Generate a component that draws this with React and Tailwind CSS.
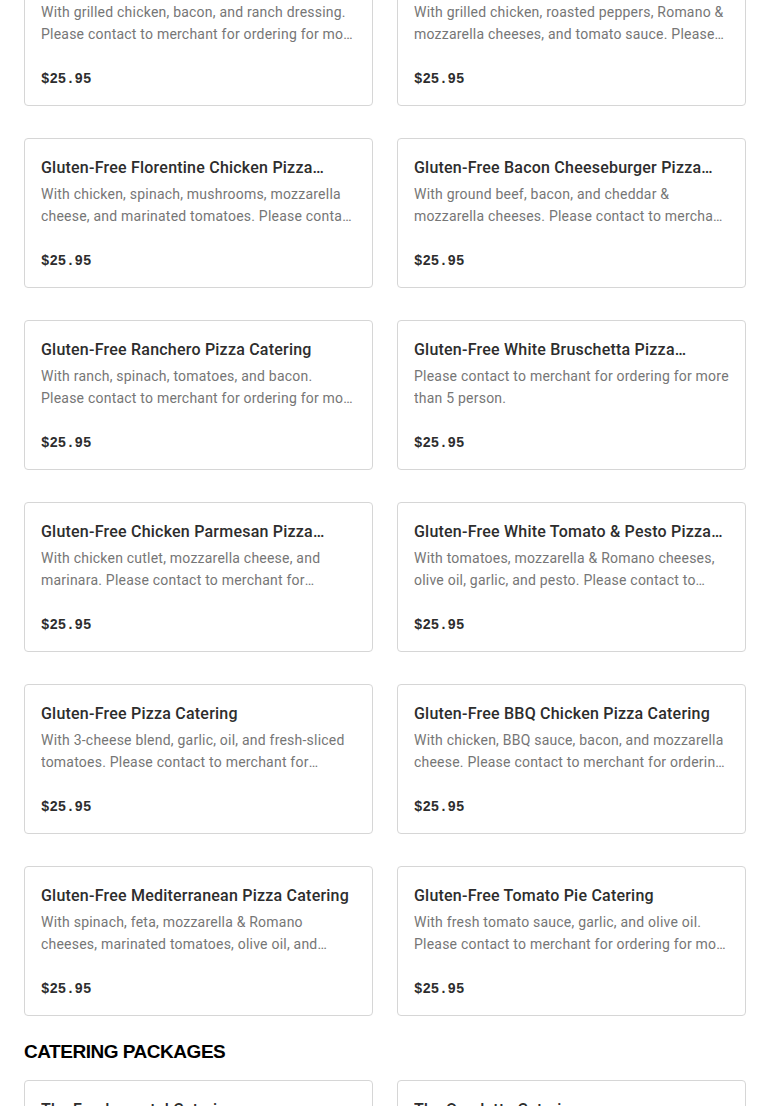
import React from "react"

const ITEMS = [
  {
    title: "Gluten-Free Chicken Bacon Ranch Pizza Catering",
    desc: "With grilled chicken, bacon, and ranch dressing. Please contact to merchant for ordering for more than 5 person.",
  },
  {
    title: "Gluten-Free Chicken & Roasted Pepper Pizza Catering",
    desc: "With grilled chicken, roasted peppers, Romano & mozzarella cheeses, and tomato sauce. Please contact to merchant for ordering for more than 5 person.",
  },
  {
    title: "Gluten-Free Florentine Chicken Pizza Catering",
    desc: "With chicken, spinach, mushrooms, mozzarella cheese, and marinated tomatoes. Please contact to merchant for ordering for more than 5 person.",
  },
  {
    title: "Gluten-Free Bacon Cheeseburger Pizza Catering",
    desc: "With ground beef, bacon, and cheddar & mozzarella cheeses. Please contact to merchant for ordering for more than 5 person.",
  },
  {
    title: "Gluten-Free Ranchero Pizza Catering",
    desc: "With ranch, spinach, tomatoes, and bacon. Please contact to merchant for ordering for more than 5 person.",
  },
  {
    title: "Gluten-Free White Bruschetta Pizza Catering",
    desc: "Please contact to merchant for ordering for more than 5 person.",
  },
  {
    title: "Gluten-Free Chicken Parmesan Pizza Catering",
    desc: "With chicken cutlet, mozzarella cheese, and marinara. Please contact to merchant for ordering for more than 5 person.",
  },
  {
    title: "Gluten-Free White Tomato & Pesto Pizza Catering",
    desc: "With tomatoes, mozzarella & Romano cheeses, olive oil, garlic, and pesto. Please contact to merchant for ordering for more than 5 person.",
  },
  {
    title: "Gluten-Free Pizza Catering",
    desc: "With 3-cheese blend, garlic, oil, and fresh-sliced tomatoes. Please contact to merchant for ordering for more than 5 person.",
  },
  {
    title: "Gluten-Free BBQ Chicken Pizza Catering",
    desc: "With chicken, BBQ sauce, bacon, and mozzarella cheese. Please contact to merchant for ordering for more than 5 person.",
  },
  {
    title: "Gluten-Free Mediterranean Pizza Catering",
    desc: "With spinach, feta, mozzarella & Romano cheeses, marinated tomatoes, olive oil, and garlic. Please contact to merchant for ordering for more than 5 person.",
  },
  {
    title: "Gluten-Free Tomato Pie Catering",
    desc: "With fresh tomato sauce, garlic, and olive oil. Please contact to merchant for ordering for more than 5 person.",
  },
]

const PACKAGES = [
  { title: "The Fundamental Catering", desc: "Please contact to merchant for ordering for more than 5 person." },
  { title: "The Omelette Catering", desc: "Please contact to merchant for ordering for more than 5 person." },
]

function Card({ item }) {
  return (
    <div className="h-[150px] rounded border border-[#d6d6d6] bg-white px-4 pt-[17px]">
      <h3 className="line-clamp-1 text-[16px] leading-6 font-medium tracking-[0.22px] text-[#2d2d2d]">
        {item.title}
      </h3>
      <p className="mt-[3px] line-clamp-2 h-[44px] text-[14px] leading-[22px] tracking-[0.22px] text-[#767676]">
        {item.desc}
      </p>
      <div className="mt-[24px] font-['Liberation_Mono',monospace] text-[14px] leading-5 font-bold text-[#2d2d2d]">
        $25.95
      </div>
    </div>
  )
}

export default function App() {
  return (
    <div className="min-h-screen overflow-hidden bg-white px-6 font-['Roboto',sans-serif]">
      <div className="-mt-[44px] grid grid-cols-2 gap-x-6 gap-y-8">
        {ITEMS.map((it) => (
          <Card key={it.title} item={it} />
        ))}
      </div>
      <h2 className="mt-[24px] mb-[16px] font-['Liberation_Sans',sans-serif] text-[19px] leading-6 font-bold tracking-tight text-black uppercase">
        Catering Packages
      </h2>
      <div className="grid grid-cols-2 gap-x-6 gap-y-8">
        {PACKAGES.map((it) => (
          <Card key={it.title} item={it} />
        ))}
      </div>
    </div>
  )
}
